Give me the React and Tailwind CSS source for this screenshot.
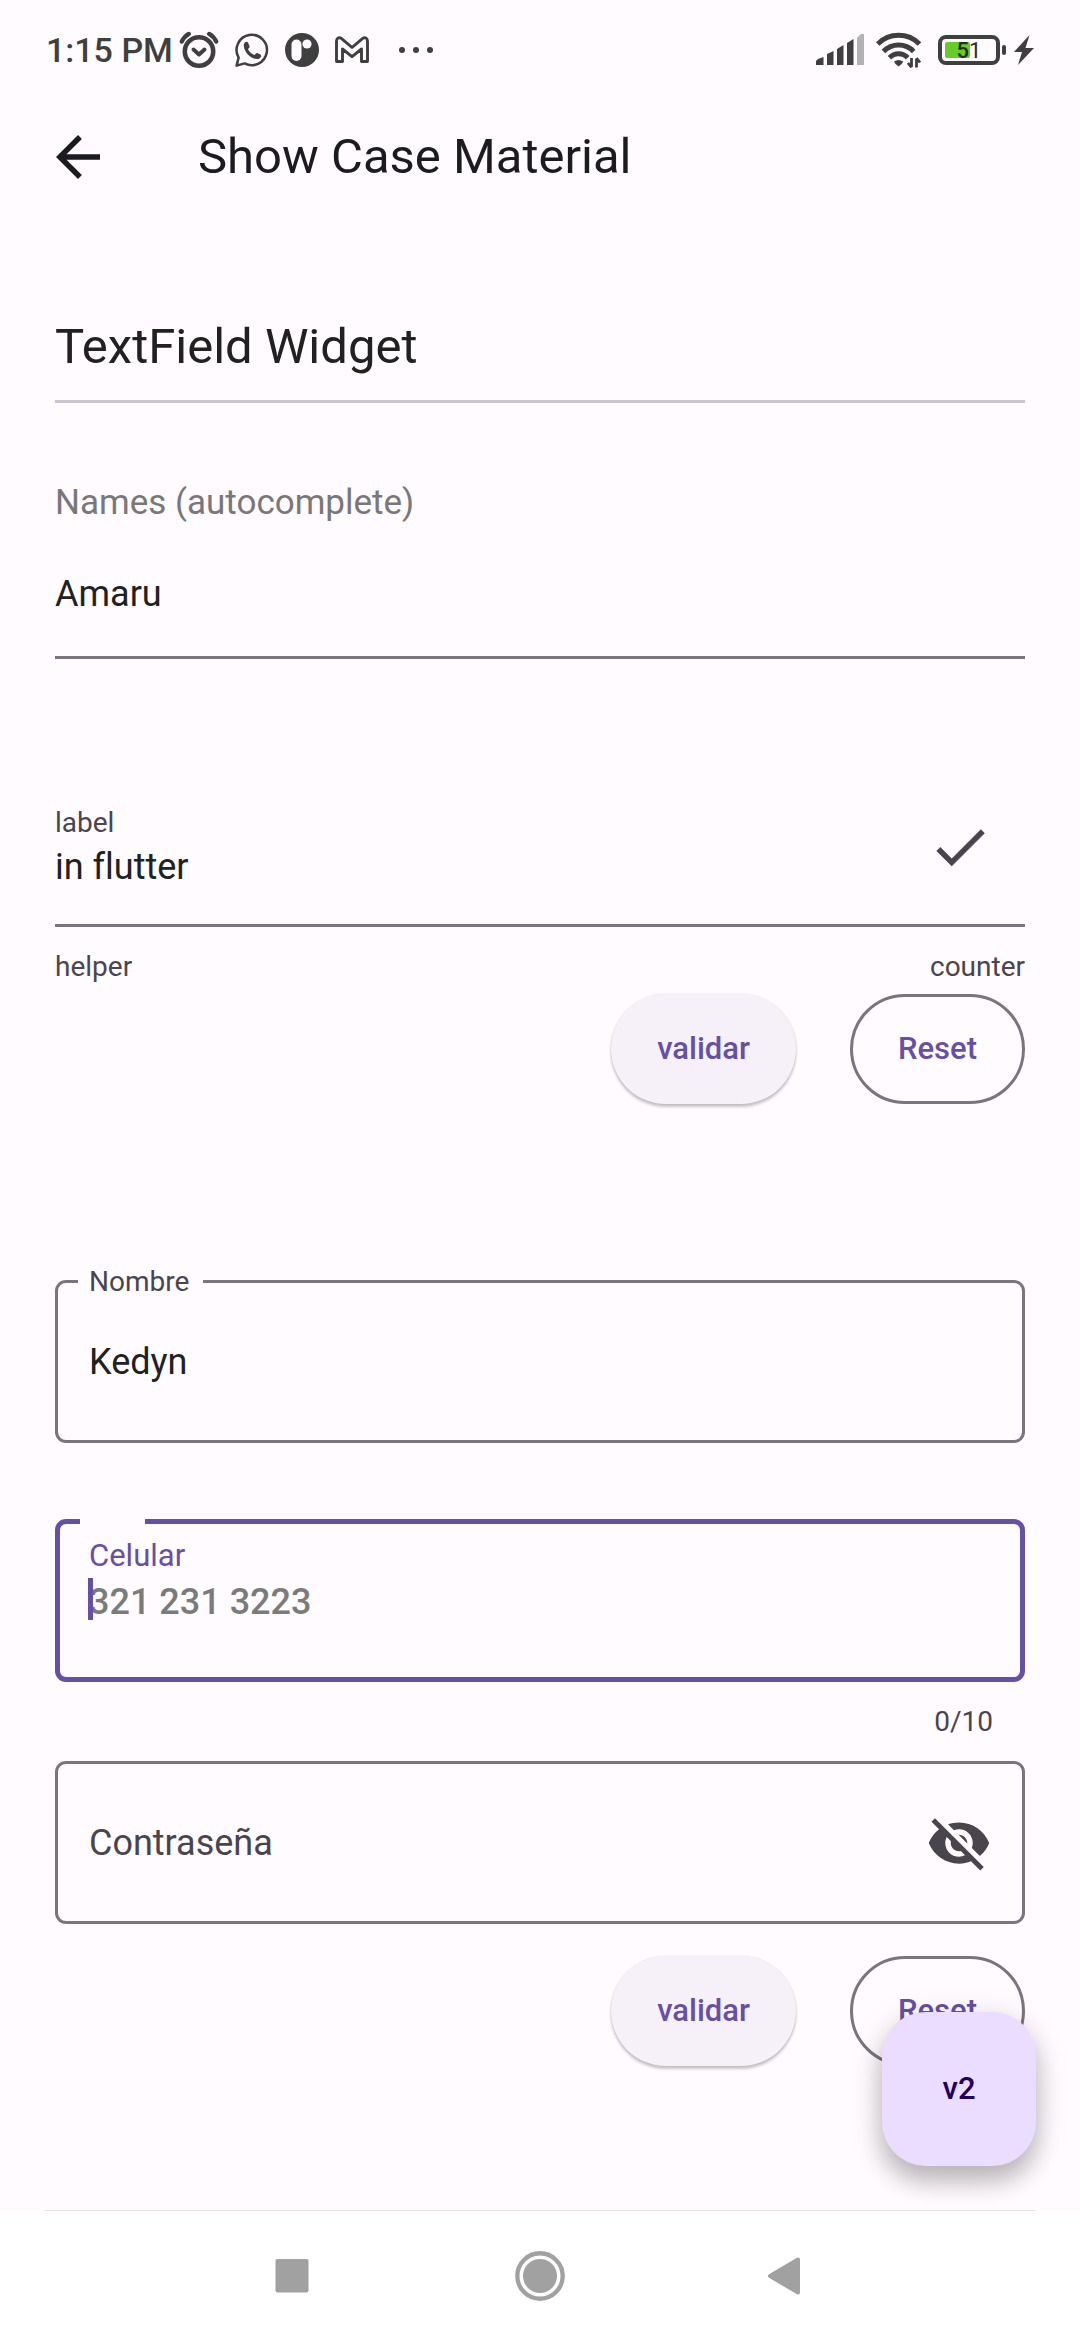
import React from "react";
import { MdArrowBack, MdCheck, MdVisibilityOff } from "react-icons/md";

function AlarmIcon() {
  return (
    <svg width="40" height="38" viewBox="0 0 40 38" fill="none" stroke="#3f3f3f" strokeLinecap="round" aria-label="Alarm">
      <circle cx="20" cy="20.5" r="14.2" strokeWidth="4.6" />
      <path d="M14.5 18.5 20 23.5l5.5-5" strokeWidth="4" strokeLinejoin="round" />
      <path d="M2.8 10.5q2.5-5 7-7.6M37.2 10.5q-2.5-5-7-7.6" strokeWidth="4.2" />
    </svg>
  );
}

function WhatsAppIcon() {
  return (
    <svg width="34" height="36" viewBox="0 0 34 36" aria-label="WhatsApp">
      <path
        d="M1.6 33.6 3.6 25.6A15.2 15.2 0 1 1 9.6 31.4Z"
        fill="none"
        stroke="#3f3f3f"
        strokeWidth="2.5"
        strokeLinejoin="round"
      />
      <path
        d="M9.3 11.2c1.2-1.6 2.9-1.8 3.6-.6l1.6 3.5c.5 1.1-.9 2.2-1.5 3.2 1.5 2.8 3.6 4.5 6.4 5.6 1-.7 1.9-2.3 2.9-1.9l3.4 1.8c1 .7.3 2.6-.9 3.4-3.4 2.2-8.2-.2-11.2-3-3.1-2.9-6.1-8.1-4.3-12z"
        fill="#3f3f3f"
      />
    </svg>
  );
}

function ParkingIcon() {
  return (
    <svg width="34" height="34" viewBox="0 0 34 34" aria-label="Notification">
      <circle cx="17" cy="17" r="17" fill="#3f3f3f" />
      <rect x="6.5" y="6.5" width="10" height="21.5" rx="5" fill="#fffbff" />
      <circle cx="22" cy="11" r="4.6" fill="#fffbff" />
    </svg>
  );
}

function GmailIcon() {
  return (
    <svg width="34" height="28" viewBox="0 0 34 28" fill="none" stroke="#3f3f3f" strokeWidth="2.9" strokeLinejoin="round" aria-label="Gmail">
      <path d="M1.5 5.2C1.5 2 4.200.900 6.300 2.400L17 11.500 27.700 2.400C29.800.900 32.500 2 32.500 5.200V25.500H26.500V13L17 20.700 7.500 13V25.500H1.500Z" />
    </svg>
  );
}

function SignalIcon() {
  return (
    <svg width="48" height="32" viewBox="0 0 48 32" fill="#3f3f3f" aria-label="Signal">
      <path d="M0 31v-4l2-2 5.500-2v8H0z" />
      <path d="M11 31V20l6.500-3v14z" />
      <path d="M21 31V15l6.500-4v20z" />
      <path d="M31 31V9l6.500-4v26z" />
      <path d="M41 31V4l4-4h3v31z" fill="#b3b1b3" />
    </svg>
  );
}

function WifiIcon() {
  return (
    <svg width="46" height="38" viewBox="0 0 46 38" fill="none" stroke="#3f3f3f" strokeWidth="5" aria-label="Wi-Fi">
      <path d="M1.700 13A29.500 29.500 0 0 1 43.500 13" />
      <path d="M7.500 20.500A21 21 0 0 1 37.700 20.500" />
      <path d="M13.500 26.800A12.500 12.500 0 0 1 31.700 26.800" />
      <path d="M18 30.500q4.600-3.200 9.200 0l-1.500 2.500-3.100 2.500-3.100-2.500z" fill="#3f3f3f" stroke="none" />
      <path d="M35.500 27v9M32 32l3.500 4.500M40.500 36.500v-9M44 31.500 40.500 27" strokeWidth="2.800" />
    </svg>
  );
}

function Battery() {
  return (
    <div className="relative h-[30px] w-[68px]">
      <svg width="68" height="30" viewBox="0 0 68 30" aria-label="Battery">
        <rect x="2" y="2" width="58" height="26" rx="6" fill="none" stroke="#3f3f3f" strokeWidth="4" />
        <rect x="7" y="7" width="25" height="16" rx="2" fill="#66cc2a" />
        <rect x="64" y="10" width="4" height="10" rx="2" fill="#3f3f3f" />
      </svg>
      <span className="absolute inset-0 pr-1.5 text-center text-[22px] leading-[32px] text-[#2b2b2b]">
        <span className="font-medium">5</span>1
      </span>
    </div>
  );
}

function StatusBar() {
  return (
    <div className="flex h-20 items-center justify-between pt-5 pr-[46px] pl-[46px] text-[#3f3f3f]">
      <div className="flex items-center">
        <span className="text-[34px] font-medium">1:15 PM</span>
        <div className="ml-1.5 flex items-center gap-4">
          <AlarmIcon />
          <WhatsAppIcon />
          <ParkingIcon />
          <GmailIcon />
        </div>
        <div className="ml-[30px] flex gap-2">
          <span className="size-1.5 rounded-full bg-[#3f3f3f]" />
          <span className="size-1.5 rounded-full bg-[#3f3f3f]" />
          <span className="size-1.5 rounded-full bg-[#3f3f3f]" />
        </div>
      </div>
      <div className="flex items-center">
        <SignalIcon />
        <div className="ml-3">
          <WifiIcon />
        </div>
        <div className="ml-4">
          <Battery />
        </div>
        <svg className="ml-2" width="20" height="30" viewBox="0 0 20 30" aria-label="Charging">
          <path d="M15.500 0 0 17H8L4 30 20 13H11.500Z" fill="#3f3f3f" />
        </svg>
      </div>
    </div>
  );
}

function Actions() {
  return (
    <div className="flex justify-end gap-[54px] text-[31px] font-medium text-[#6750a4]">
      <button
        type="button"
        className="h-[110px] rounded-full bg-[#f6f1f9] px-[46px] shadow-[0_3px_3px_rgba(0,0,0,0.22),0_0_2px_rgba(0,0,0,0.12)]"
      >
        validar
      </button>
      <button type="button" className="h-[110px] rounded-full border-3 border-[#79747e] px-[45px]">
        Reset
      </button>
    </div>
  );
}

export default function App() {
  return (
    <div className="flex min-h-screen flex-col bg-[#fffbff] font-['Roboto',sans-serif] text-[#1c1b1f]">
      <StatusBar />
      <header className="flex h-[154px] items-center gap-[87px] px-[45px]">
        <button type="button" aria-label="Back">
          <MdArrowBack className="size-[66px]" />
        </button>
        <h1 className="text-[49px] leading-14">Show Case Material</h1>
      </header>

      <main className="relative flex-1 px-[55px]">
        <h2 className="border-b-3 border-[#cac4d0] pt-[85px] pb-[25px] text-[49px] leading-14 text-[#212121]">
          TextField Widget
        </h2>

        <div className="mt-20 flex flex-col leading-10">
          <label htmlFor="names" className="text-[35px] text-[#79777a]">
            Names (autocomplete)
          </label>
          <div className="mt-[51px] border-b-3 border-[#79747e] pb-[42px]">
            <input
              id="names"
              defaultValue="Amaru"
              className="block h-10 w-full text-[36px] text-[#212121] outline-none"
            />
          </div>
        </div>

        <div className="mt-[148px] flex border-b-3 border-[#79747e] pb-[37px]">
          <div className="flex-1">
            <label htmlFor="flutter" className="block text-[28px] leading-8 text-[#49454f]">
              label
            </label>
            <input
              id="flutter"
              defaultValue="in flutter"
              className="mt-2 block h-10 w-full text-[36px] text-[#212121] outline-none [font-variant-ligatures:none]"
            />
          </div>
          <MdCheck className="mt-[7px] mr-8 size-[66px] text-[#49454f]" />
        </div>
        <div className="mt-6 mb-[11px] flex justify-between text-[28px] leading-8 text-[#49454f]">
          <span>helper</span>
          <span>counter</span>
        </div>
        <Actions />

        <div className="relative mt-[176px] flex h-[163px] items-center rounded-[11px] border-3 border-[#79747e] px-[31px]">
          <label
            htmlFor="nombre"
            className="absolute -top-[17px] left-5 bg-[#fffbff] pr-3.5 pl-[11px] text-[28px] leading-8 text-[#49454f]"
          >
            Nombre
          </label>
          <input id="nombre" defaultValue="Kedyn" className="h-10 w-full text-[36px] text-[#212121] outline-none" />
        </div>

        <div className="relative mt-[76px] h-[163px] rounded-[11px] border-5 border-[#6750a4] px-[29px] pt-4">
          <span className="absolute -top-[5px] left-5 h-[5px] w-[65px] bg-[#fffbff]" />
          <label htmlFor="celular" className="block text-[31px] leading-8 text-[#6750a4]">
            Celular
          </label>
          <div className="relative mt-2.5">
            <input
              id="celular"
              type="tel"
              maxLength={10}
              placeholder="321 231 3223"
              className="block h-10 w-full text-[36px] font-medium outline-none placeholder:text-[#7b7b7b]"
            />
            <span className="absolute -top-1 -left-px h-[42px] w-[5px] bg-[#6750a4]" />
          </div>
        </div>
        <div className="mt-6 mb-[23px] pr-8 text-right text-[28px] leading-8 text-[#49454f]">0/10</div>

        <div className="mb-8 flex h-[163px] items-center rounded-[11px] border-3 border-[#79747e] pr-[30px] pl-[31px]">
          <input
            type="password"
            aria-label="Contraseña"
            placeholder="Contraseña"
            className="h-10 min-w-0 flex-1 text-[36px] outline-none placeholder:text-[#49454f]"
          />
          <button type="button" aria-label="Show password">
            <MdVisibilityOff className="size-[66px] text-[#49454f]" />
          </button>
        </div>
        <Actions />

        <button
          type="button"
          className="absolute right-11 bottom-11 size-[154px] rounded-[44px] bg-[#eaddff] text-[31px] font-medium text-[#21005d] shadow-[0_16px_24px_rgba(0,0,0,0.22),0_6px_36px_rgba(0,0,0,0.12)]"
        >
          v2
        </button>
      </main>

      <nav className="relative z-10 bg-white px-11">
        <div className="flex h-[130px] items-center justify-center gap-[198px] border-t border-[#e6e4e6]">
          <button type="button" aria-label="Recent apps">
            <svg width="50" height="50" viewBox="0 0 50 50">
              <rect x="8.500" y="8" width="33" height="33.500" rx="2" fill="#a1a1a1" />
            </svg>
          </button>
          <button type="button" aria-label="Home">
            <svg width="50" height="50" viewBox="0 0 50 50">
              <circle cx="25" cy="25" r="22.700" fill="none" stroke="#a1a1a1" strokeWidth="4.400" />
              <circle cx="25" cy="25" r="17" fill="#a1a1a1" />
            </svg>
          </button>
          <button type="button" aria-label="Back">
            <svg width="50" height="50" viewBox="0 0 50 50">
              <path d="M7 25 35 8.500V41.500Z" fill="#a1a1a1" stroke="#a1a1a1" strokeWidth="4" strokeLinejoin="round" />
            </svg>
          </button>
        </div>
      </nav>
    </div>
  );
}
